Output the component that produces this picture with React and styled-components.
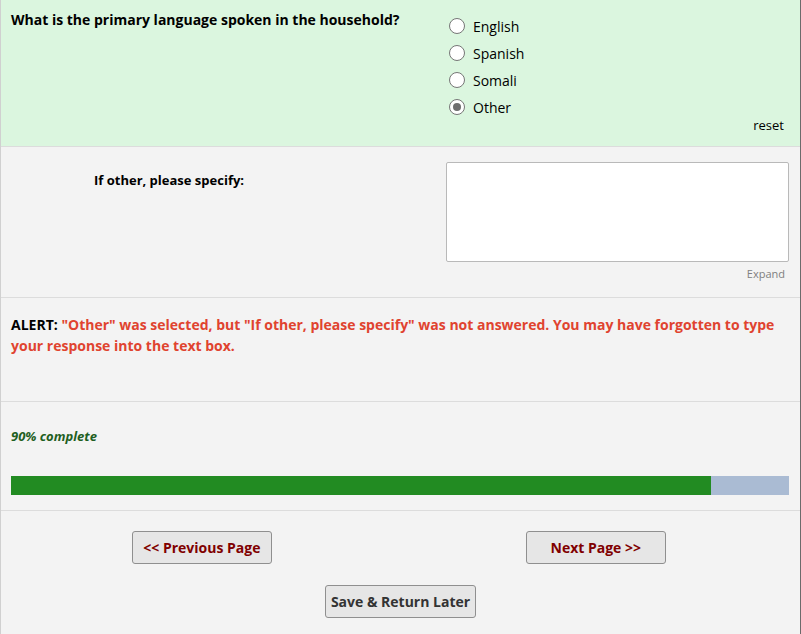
import React from 'react';
import styled, { createGlobalStyle } from 'styled-components';

const GlobalStyle = createGlobalStyle`
  html, body {
    margin: 0;
    padding: 0;
    background: #f3f3f3;
    font-family: "Open Sans", "Liberation Sans", sans-serif;
  }
`;

const Survey = styled.div`
  width: 801px;
  height: 634px;
  box-sizing: border-box;
  border-left: 1px solid #d0d0d0;
  border-right: 1px solid #6b6b6b;
  background: #f3f3f3;
  overflow: hidden;
`;

const Row = styled.div`
  display: flex;
  box-sizing: border-box;
  height: ${props => props.h}px;
  background: ${props => props.bg || '#f3f3f3'};
  border-bottom: 1px solid #dcdcdc;
`;

const LabelCell = styled.div`
  width: ${props => props.w || 435}px;
  box-sizing: border-box;
  padding: ${props => props.pad || '10px 10px'};
  font-size: ${props => props.size || 13}px;
  font-weight: bold;
  color: #000;
  line-height: 18px;
`;

const FieldCell = styled.div`
  flex: 1;
  display: flex;
  flex-direction: column;
`;

const RadioList = styled.div`
  display: flex;
  flex-direction: column;
  gap: 7px;
  padding: 16px 0 0 13px;
`;

const RadioRow = styled.label`
  display: flex;
  align-items: center;
  gap: 8px;
  font-size: 14px;
  color: #000;
  height: 20px;
`;

const RadioDot = styled.span`
  width: 14px;
  height: 14px;
  border-radius: 50%;
  border: 1px solid #767676;
  background: #fff;
  display: flex;
  align-items: center;
  justify-content: center;
  flex-shrink: 0;

  &::after {
    content: '';
    width: 8px;
    height: 8px;
    border-radius: 50%;
    background: ${props => props.checked ? '#6e6e6e' : 'transparent'};
  }
`;

const ResetLink = styled.span`
  align-self: flex-end;
  margin: -1px 16px 0 0;
  font-size: 13px;
  color: #000;
`;

const TextArea = styled.div`
  width: 343px;
  height: 100px;
  box-sizing: border-box;
  margin: 15px 0 0 10px;
  background: #fff;
  border: 1px solid #b9b9b9;
  border-radius: 2px;
`;

const ExpandLink = styled.span`
  align-self: flex-end;
  margin: 4px 15px 0 0;
  font-size: 11px;
  color: #808080;
`;

const AlertBox = styled.div`
  padding: 16px 10px;
  font-size: 14px;
  font-weight: bold;
  line-height: 21px;
  color: #e0432f;
`;

const AlertTag = styled.span`
  color: #000;
`;

const ProgressBox = styled.div`
  width: 100%;
  padding: 26px 11px 0 10px;
  box-sizing: border-box;
`;

const ProgressText = styled.div`
  font-size: 13px;
  font-weight: bold;
  font-style: italic;
  color: #1f5f1f;
  line-height: 16px;
`;

const ProgressTrack = styled.div`
  margin-top: 32px;
  height: 19px;
  background: #aabbd3;
  display: flex;
`;

const ProgressFill = styled.div`
  height: 100%;
  background: #228b22;
`;

const ButtonArea = styled.div`
  display: grid;
  grid-template-columns: 1fr 1fr;
  row-gap: 21px;
  padding-top: 20px;
`;

const Cell = styled.div`
  display: flex;
  justify-content: ${props => props.justify || 'center'};
  grid-column: ${props => props.span ? '1 / span 2' : 'auto'};
  padding: ${props => props.pad || '0'};
`;

const NavButton = styled.button`
  height: 33px;
  padding: 0 ${props => props.px || 10}px;
  font-family: "Open Sans", "Liberation Sans", sans-serif;
  font-size: 14px;
  font-weight: bold;
  color: ${props => props.dark ? '#333' : '#800000'};
  background: #e6e6e6;
  border: 1px solid #8f8f8f;
  border-radius: 3px;
`;

const options = ['English', 'Spanish', 'Somali', 'Other'];

export default function App() {
  const pct = 90;
  return (
    <>
      <GlobalStyle />
      <Survey>
        <Row h={147} bg="#dbf6df">
          <LabelCell size={14} pad="11px 10px">What is the primary language spoken in the household?</LabelCell>
          <FieldCell>
            <RadioList>
              {options.map(o => (
                <RadioRow key={o}>
                  <RadioDot checked={o === 'Other'} />
                  {o}
                </RadioRow>
              ))}
            </RadioList>
            <ResetLink>reset</ResetLink>
          </FieldCell>
        </Row>

        <Row h={151}>
          <LabelCell pad="24px 0 0 93px">If other, please specify:</LabelCell>
          <FieldCell>
            <TextArea />
            <ExpandLink>Expand</ExpandLink>
          </FieldCell>
        </Row>

        <Row h={104}>
          <AlertBox>
            <AlertTag>ALERT:</AlertTag> "Other" was selected, but "If other, please specify" was not answered. You may have forgotten to type your response into the text box.
          </AlertBox>
        </Row>

        <Row h={109}>
          <ProgressBox>
            <ProgressText>{pct}% complete</ProgressText>
            <ProgressTrack>
              <ProgressFill style={{ width: `${pct}%` }} />
            </ProgressTrack>
          </ProgressBox>
        </Row>

        <ButtonArea>
          <Cell justify="flex-end" pad="0 129px 0 0">
            <NavButton>&lt;&lt; Previous Page</NavButton>
          </Cell>
          <Cell justify="flex-start" pad="0 0 0 125px">
            <NavButton px={24}>Next Page &gt;&gt;</NavButton>
          </Cell>
          <Cell span>
            <NavButton dark px={5}>Save &amp; Return Later</NavButton>
          </Cell>
        </ButtonArea>
      </Survey>
    </>
  );
}
